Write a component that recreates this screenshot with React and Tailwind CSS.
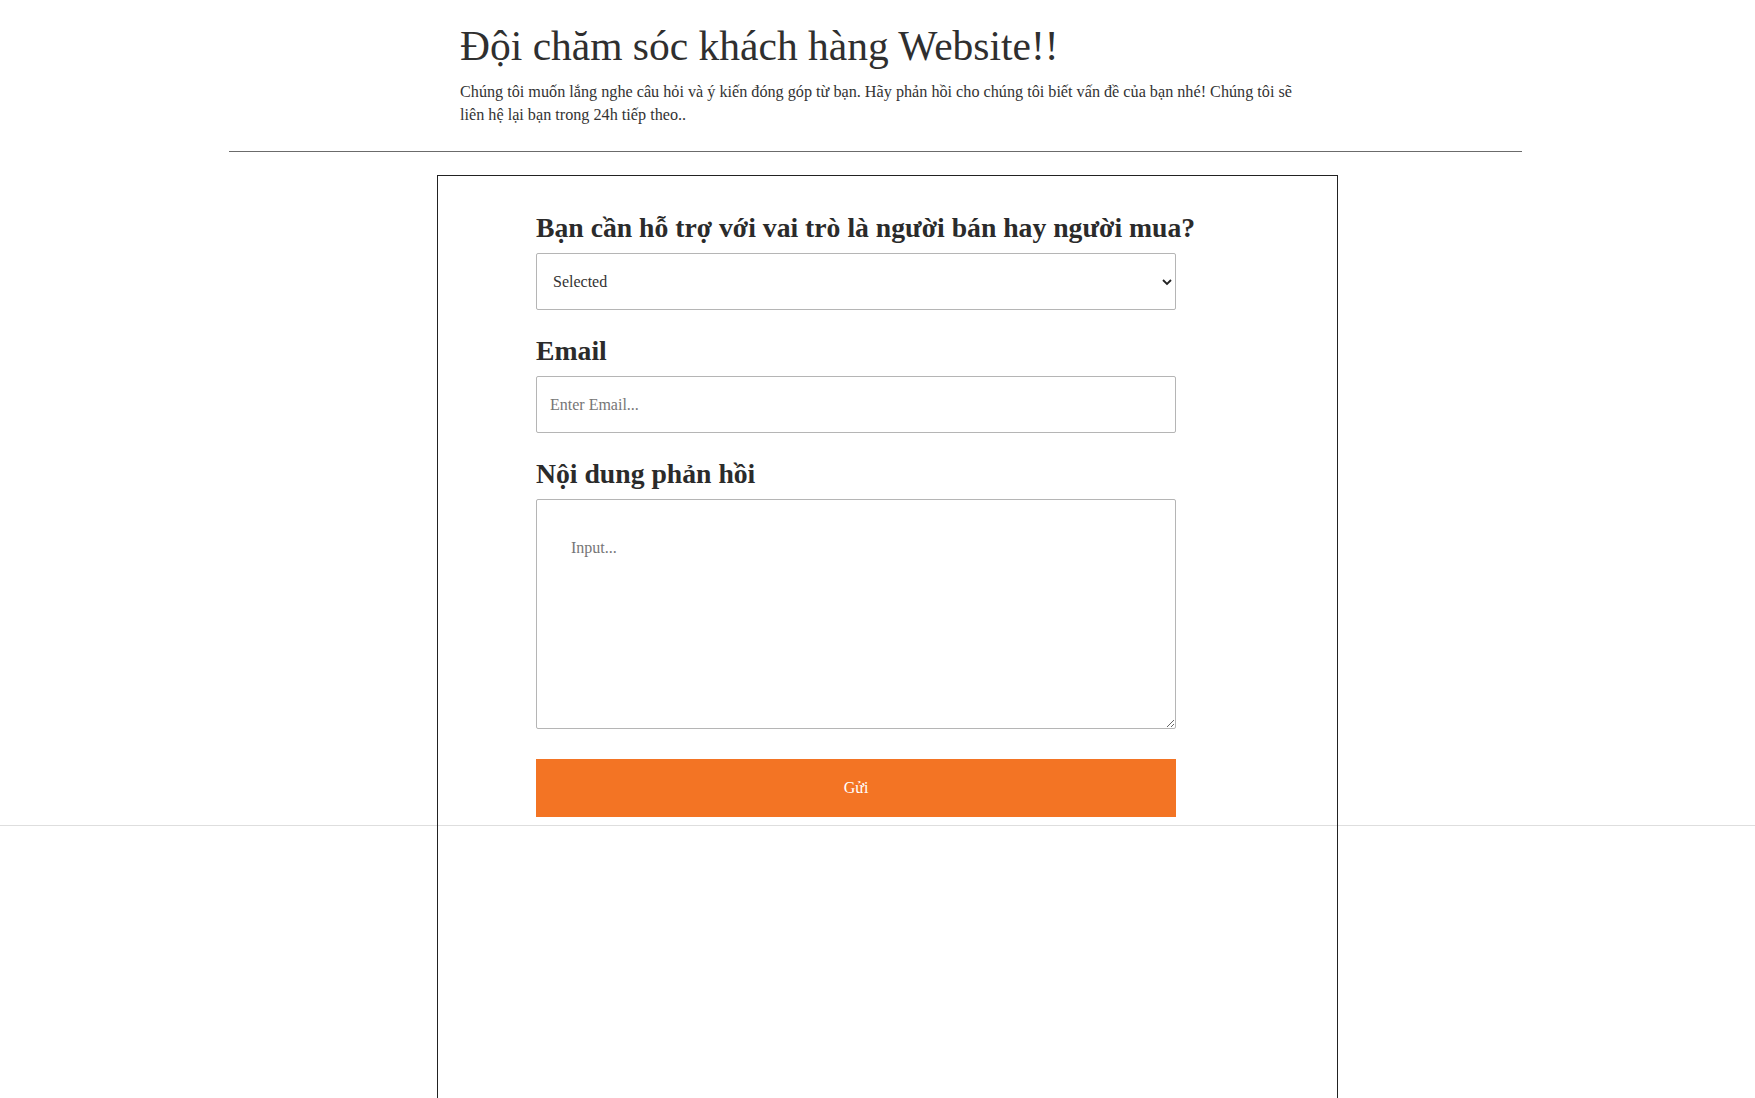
import { useState } from 'react';

const Label = ({ children }) => (
  <h3 className="whitespace-nowrap text-[27.7px] leading-[30px] font-bold text-[#2b2b2b] mb-[10px]">{children}</h3>
);

const App = () => {
  const [role, setRole] = useState('');
  const [email, setEmail] = useState('');
  const [message, setMessage] = useState('');

  return (
    <div className="min-h-screen bg-white text-[#333] font-['Liberation_Serif','Times_New_Roman',serif] overflow-hidden">
      <div className="h-[826px] border-b border-[#dedede]">
        {/* header */}
        <div className="ml-[460px] w-[850px] pt-[22px]">
          <h1 className="text-[41.5px] leading-[48px] font-normal text-[#2f2f2f]">
            Đội chăm sóc khách hàng Website!!
          </h1>
          <p className="mt-[11px] text-[16.2px] leading-[23px] text-[#333]">
            Chúng tôi muốn lắng nghe câu hỏi và ý kiến đóng góp từ bạn. Hãy phản hồi cho chúng tôi biết vấn đề của bạn nhé! Chúng tôi sẽ liên hệ lại bạn trong 24h tiếp theo..
          </p>
        </div>

        <div className="ml-[229px] w-[1293px] h-px bg-[#6b6b6b] mt-[24px]" />

        {/* form box */}
        <div className="ml-[437px] mt-[23px] w-[901px] h-[960px] border border-[#222] pl-[98px] pt-[37px]">
          <form className="w-[640px]" onSubmit={(e) => e.preventDefault()}>
            <Label>Bạn cần hỗ trợ với vai trò là người bán hay người mua?</Label>
            <div className="relative">
              <select
                value={role}
                onChange={(e) => setRole(e.target.value)}
                className="appearance-none w-full h-[57px] border border-[#b5b5b5] rounded-[2px] pl-[16px] pr-8 text-[16px] text-[#333] bg-white outline-none"
              >
                <option value="">Selected</option>
                <option value="seller">Người bán</option>
                <option value="buyer">Người mua</option>
              </select>
              <svg
                className="absolute right-[3px] top-1/2 -translate-y-1/2 pointer-events-none"
                width="12"
                height="8"
                viewBox="0 0 12 8"
                fill="none"
              >
                <polyline points="2,2 6,6 10,2" stroke="#222" strokeWidth="1.8" />
              </svg>
            </div>

            <div className="mt-[26px]">
              <Label>Email</Label>
              <input
                type="email"
                value={email}
                onChange={(e) => setEmail(e.target.value)}
                placeholder="Enter Email..."
                className="w-full h-[57px] border border-[#b5b5b5] rounded-[2px] pl-[13px] text-[16px] text-[#333] placeholder:text-[#767676] outline-none"
              />
            </div>

            <div className="mt-[26px]">
              <Label>Nội dung phản hồi</Label>
              <textarea
                value={message}
                onChange={(e) => setMessage(e.target.value)}
                placeholder="Input..."
                className="block w-full h-[230px] border border-[#b5b5b5] rounded-[2px] pl-[34px] pt-[36px] pr-4 text-[16px] text-[#333] placeholder:text-[#767676] outline-none"
              />
            </div>

            <button
              type="submit"
              className="mt-[30px] w-full h-[58px] bg-[#f37424] text-white text-[16px]"
            >
              Gửi
            </button>
          </form>
        </div>
      </div>
    </div>
  );
};

export default App;
